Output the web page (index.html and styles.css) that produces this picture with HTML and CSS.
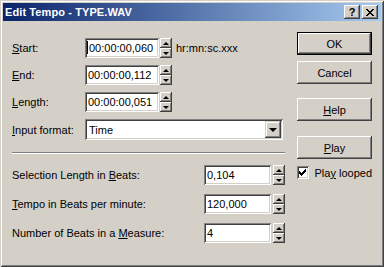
FILE: index.html
```html
<!DOCTYPE html>
<html lang="en">
<head>
  <meta charset="UTF-8">
  <meta name="viewport" content="width=device-width, initial-scale=1.0">
  <title>Edit Tempo - TYPE.WAV</title>
  <link rel="stylesheet" href="styles.css">
</head>
<body>
  <div class="window">
    <div class="titlebar">
      <span class="title">Edit Tempo - TYPE.WAV</span>
      <div class="caption-buttons">
        <span class="cap-btn help-glyph">?</span>
        <span class="cap-btn close">
          <svg width="8" height="7" viewBox="0 0 8 7" shape-rendering="crispEdges">
            <path d="M0 0h2v1h-2zM6 0h2v1h-2zM1 1h2v1h-2zM5 1h2v1h-2zM2 2h4v1h-4zM3 3h2v1h-2zM2 4h4v1h-4zM1 5h2v1h-2zM5 5h2v1h-2zM0 6h2v1h-2zM6 6h2v1h-2z" fill="#000"/>
          </svg>
        </span>
      </div>
    </div>

    <div class="client">
      <div class="fields">
        <div class="row">
          <label class="label"><u>S</u>tart:</label>
          <div class="edit time-edit"><span class="caret"></span>00:00:00,060</div>
          <div class="spin"><span class="spin-btn"><i class="arrow-up"></i></span><span class="spin-btn"><i class="arrow-down"></i></span></div>
          <span class="hint">hr:mn:sc.xxx</span>
        </div>
        <div class="row">
          <label class="label"><u>E</u>nd:</label>
          <div class="edit time-edit">00:00:00,112</div>
          <div class="spin"><span class="spin-btn"><i class="arrow-up"></i></span><span class="spin-btn"><i class="arrow-down"></i></span></div>
        </div>
        <div class="row">
          <label class="label"><u>L</u>ength:</label>
          <div class="edit time-edit">00:00:00,051</div>
          <div class="spin"><span class="spin-btn"><i class="arrow-up"></i></span><span class="spin-btn"><i class="arrow-down"></i></span></div>
        </div>

        <div class="row combo-row">
          <label class="label"><u>I</u>nput format:</label>
          <div class="combo">
            <span class="combo-text">Time</span>
            <span class="combo-btn"><i class="arrow-down big"></i></span>
          </div>
        </div>

        <div class="separator"></div>

        <div class="row beat-row">
          <label class="label wide">Selection Length in <u>B</u>eats:</label>
          <div class="edit beat-edit">0,104</div>
          <div class="spin"><span class="spin-btn"><i class="arrow-up"></i></span><span class="spin-btn"><i class="arrow-down"></i></span></div>
        </div>
        <div class="row beat-row">
          <label class="label wide"><u>T</u>empo in Beats per minute:</label>
          <div class="edit beat-edit">120,000</div>
          <div class="spin"><span class="spin-btn"><i class="arrow-up"></i></span><span class="spin-btn"><i class="arrow-down"></i></span></div>
        </div>
        <div class="row beat-row">
          <label class="label wide">Number of Beats in a <u>M</u>easure:</label>
          <div class="edit beat-edit">4</div>
          <div class="spin"><span class="spin-btn"><i class="arrow-up"></i></span><span class="spin-btn"><i class="arrow-down"></i></span></div>
        </div>
      </div>

      <div class="actions">
        <button class="btn default">OK</button>
        <button class="btn cancel">Cancel</button>
        <button class="btn help"><u>H</u>elp</button>
        <button class="btn play"><u>P</u>lay</button>
        <div class="check-row">
          <span class="checkbox">
            <svg width="7" height="7" viewBox="0 0 7 7" shape-rendering="crispEdges">
              <path d="M6 0h1v3h-1zM5 1h1v3h-1zM4 2h1v3h-1zM3 3h1v3h-1zM2 4h1v3h-1zM1 3h1v3h-1zM0 2h1v3h-1z" fill="#000"/>
            </svg>
          </span>
          <span class="check-label">Pla<u>y</u> looped</span>
        </div>
      </div>
    </div>
  </div>
</body>
</html>
```

FILE: styles.css
```css
* {
  box-sizing: border-box;
}
body {
  margin: 0;
  background: #d4d0c8;
  font-family: "Liberation Sans", Arial, sans-serif;
  font-size: 11px;
  color: #000;
}
u {
  text-decoration: underline;
  text-underline-offset: 1px;
}
.window {
  width: 384px;
  height: 267px;
  padding: 3px;
  background: #d4d0c8;
  box-shadow: inset 1px 1px #d4d0c8, inset -1px -1px #404040, inset 2px 2px #fff, inset -2px -2px #808080;
}
.titlebar {
  height: 18px;
  display: flex;
  align-items: center;
  padding: 0 3px 0 2px;
  background: linear-gradient(to right, #0a246a, #a6caf0);
  color: #fff;
}
.title {
  font-weight: bold;
  font-size: 11px;
  letter-spacing: 0.1px;
}
.caption-buttons {
  margin-left: auto;
  display: flex;
  gap: 2px;
}
.cap-btn {
  width: 16px;
  height: 14px;
  display: flex;
  align-items: center;
  justify-content: center;
  background: #d4d0c8;
  color: #000;
  box-shadow: inset -1px -1px #404040, inset 1px 1px #fff, inset -2px -2px #808080, inset 2px 2px #d4d0c8;
}
.help-glyph {
  font-weight: bold;
  font-size: 11px;
  padding-bottom: 1px;
}
.client {
  display: flex;
  height: 243px;
  padding: 11px 0 0 9px;
}
.fields {
  width: 273px;
  padding-top: 6px;
}
.row {
  display: flex;
  align-items: center;
  height: 20px;
  margin-bottom: 7px;
}
.label {
  width: 73px;
  flex-shrink: 0;
}
.label.wide {
  width: auto;
  flex: 1;
}
.edit {
  height: 20px;
  background: #fff;
  padding: 0 3px;
  line-height: 20px;
  white-space: nowrap;
  box-shadow: inset 1px 1px #808080, inset -1px -1px #fff, inset 2px 2px #404040, inset -2px -2px #d4d0c8;
}
.time-edit {
  width: 74px;
  margin-right: 1px;
}
.caret {
  display: inline-block;
  width: 1px;
  height: 13px;
  margin-right: 1px;
  margin-left: -1px;
  background: #000;
  vertical-align: -2px;
}
.beat-edit {
  width: 67px;
  margin-right: 2px;
}
.spin {
  width: 12px;
  height: 20px;
  display: flex;
  flex-direction: column;
}
.spin-btn {
  flex: 1;
  display: flex;
  align-items: center;
  justify-content: center;
  background: #d4d0c8;
  box-shadow: inset -1px -1px #404040, inset 1px 1px #fff, inset -2px -2px #808080;
}
.arrow-up {
  width: 0;
  height: 0;
  border-left: 3px solid transparent;
  border-right: 3px solid transparent;
  border-bottom: 3px solid #000;
}
.arrow-down {
  width: 0;
  height: 0;
  border-left: 3px solid transparent;
  border-right: 3px solid transparent;
  border-top: 3px solid #000;
}
.arrow-down.big {
  border-left-width: 4px;
  border-right-width: 4px;
  border-top-width: 4px;
}
.hint {
  margin-left: 4px;
}
.combo-row {
  height: 21px;
  margin-top: 6px;
}
.combo {
  width: 198px;
  height: 21px;
  display: flex;
  align-items: center;
  padding: 2px;
  background: #fff;
  box-shadow: inset 1px 1px #808080, inset -1px -1px #fff, inset 2px 2px #404040, inset -2px -2px #d4d0c8;
}
.combo-text {
  flex: 1;
  padding-left: 2px;
}
.combo-btn {
  width: 16px;
  height: 17px;
  display: flex;
  align-items: center;
  justify-content: center;
  background: #d4d0c8;
  box-shadow: inset -1px -1px #404040, inset 1px 1px #d4d0c8, inset -2px -2px #808080, inset 2px 2px #fff;
}
.separator {
  height: 2px;
  margin: 12px 0 11px;
  border-top: 1px solid #808080;
  border-bottom: 1px solid #fff;
}
.beat-row {
  margin-bottom: 9px;
}
.actions {
  width: 75px;
  margin-left: 12px;
  display: flex;
  flex-direction: column;
}
.btn {
  width: 75px;
  height: 23px;
  padding: 0;
  border: none;
  background: #d4d0c8;
  font-family: inherit;
  font-size: 11px;
  color: #000;
  box-shadow: inset -1px -1px #404040, inset 1px 1px #fff, inset -2px -2px #808080, inset 2px 2px #d4d0c8;
}
.btn.default {
  box-shadow: inset 0 0 0 1px #000, inset -2px -2px #404040, inset 2px 2px #fff, inset -3px -3px #808080;
}
.btn.cancel {
  margin-top: 6px;
}
.btn.help {
  margin-top: 14px;
}
.btn.play {
  margin-top: 15px;
}
.check-row {
  display: flex;
  align-items: center;
  margin-top: 7px;
  white-space: nowrap;
}
.checkbox {
  width: 13px;
  height: 13px;
  display: flex;
  align-items: center;
  justify-content: center;
  background: #fff;
  box-shadow: inset 1px 1px #808080, inset -1px -1px #fff, inset 2px 2px #404040, inset -2px -2px #d4d0c8;
}
.check-label {
  margin-left: 6px;
}
```
